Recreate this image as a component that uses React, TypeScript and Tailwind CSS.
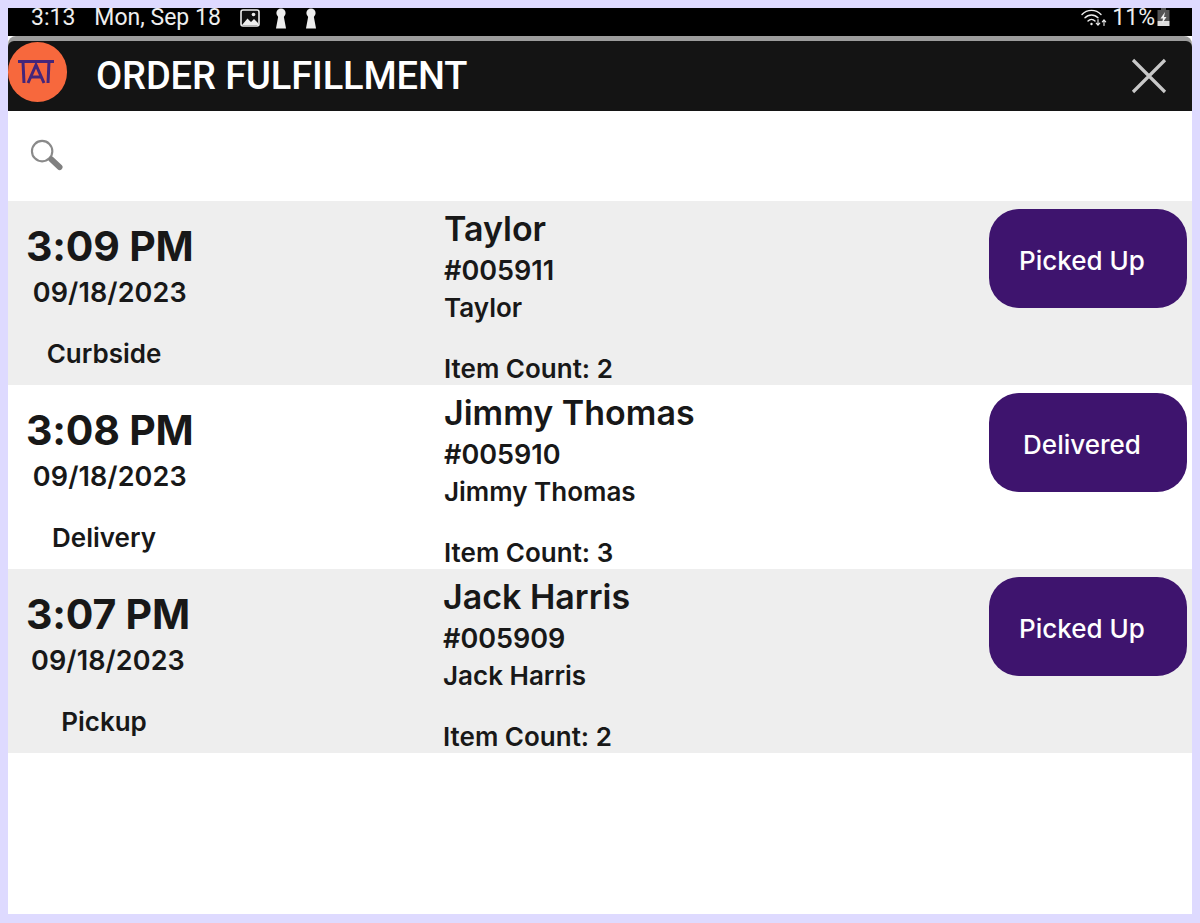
const font = { fontFamily: "Inter, 'Liberation Sans', sans-serif" };

const rows = [
  { time: "3:09 PM", date: "09/18/2023", type: "Curbside", name: "Taylor", id: "#005911", count: "Item Count: 2", action: "Picked Up", bg: "bg-[#eeeeee]", col: "w-[436px]" },
  { time: "3:08 PM", date: "09/18/2023", type: "Delivery", name: "Jimmy Thomas", id: "#005910", count: "Item Count: 3", action: "Delivered", bg: "bg-white", col: "w-[436px]" },
  { time: "3:07 PM", date: "09/18/2023", type: "Pickup", name: "Jack Harris", id: "#005909", count: "Item Count: 2", action: "Picked Up", bg: "bg-[#eeeeee]", col: "w-[435px]" },
];

function Logo() {
  return (
    <div className="mb-[8px] flex h-[60px] w-[59px] shrink-0 items-center justify-center rounded-full bg-[#f7683d] pr-[3px]">
      <svg width="40" height="32" viewBox="0 0 40 32" fill="none" stroke="#45267a" strokeWidth="3">
        <path d="M2 5.5H38" strokeWidth="3.2" />
        <path d="M7 6L8 27" />
        <path d="M33 6L32 27" />
        <path d="M12 27L20 9L28 27" />
        <path d="M15 21H25" />
      </svg>
    </div>
  );
}

function ImageIcon() {
  return (
    <svg width="20" height="18" viewBox="0 0 20 18" fill="none">
      <rect x="1" y="1" width="18" height="16" rx="2" fill="#111" stroke="#eee" strokeWidth="1.6" />
      <path d="M2 16L7.5 9.5L11 13L14 10L18 14V16Z" fill="#eee" />
      <circle cx="13.5" cy="5.5" r="1.8" fill="#eee" />
    </svg>
  );
}

function KeyholeIcon() {
  return (
    <svg width="14" height="21" viewBox="0 0 14 21" fill="#eeeeee">
      <circle cx="7" cy="5" r="4.6" />
      <path d="M4.5 7H9.5L12 20.5H2Z" />
    </svg>
  );
}

function WifiIcon() {
  return (
    <svg width="26" height="20" viewBox="0 0 26 20" fill="none" stroke="#eeeeee" strokeLinecap="round">
      <path d="M1 6.5C6 1 15 1 20 6.5" strokeWidth="1.4" />
      <path d="M4 9.8C7.5 6 13.5 6 17 9.8" strokeWidth="1.4" />
      <path d="M7 13C9 11 12 11 14 13" strokeWidth="1.4" />
      <circle cx="10.5" cy="16" r="1.2" fill="#eeeeee" stroke="none" />
      <path d="M17 11.5V17M15.2 15.2L17 17.2L18.8 15.2" strokeWidth="1.1" />
      <path d="M23 17.5V12M21.3 13.8L23 11.8L24.7 13.8" strokeWidth="1.1" />
    </svg>
  );
}

function BatteryIcon() {
  return (
    <svg width="13" height="20" viewBox="0 0 13 20">
      <rect x="4" y="0" width="5" height="3" fill="#555" />
      <rect x="0.5" y="2" width="12" height="11" fill="#555" />
      <rect x="0.5" y="13" width="12" height="5" fill="#ddd" />
      <path d="M8 4L3.5 10.5H6L5 15.5L9.5 9H7Z" fill="#f2f2f2" />
    </svg>
  );
}

function SearchIcon() {
  return (
    <svg width="33" height="33" viewBox="0 0 34 34" fill="none">
      <circle cx="12.5" cy="12.5" r="10.5" stroke="#8a8a8a" strokeWidth="2.2" />
      <path d="M22 21L30.5 29" stroke="#808080" strokeWidth="6" strokeLinecap="round" />
    </svg>
  );
}

export default function App() {
  return (
    <div className="flex h-[923px] w-[1200px] flex-col overflow-hidden bg-[#dedaff] pl-2 pr-2 pt-2 pb-[9px]" style={font}>
      <div className="flex flex-1 flex-col bg-white">
        <div className="flex h-[28px] items-start justify-between bg-black pl-[23px] pr-[22px] text-[#eeeeee]" style={{ fontFamily: "Roboto, sans-serif" }}>
          <div className="flex items-start">
            <span className="text-[23px] leading-[19px]">3:13</span>
            <span className="ml-[19px] text-[23px] leading-[19px]">Mon, Sep 18</span>
            <span className="ml-[19px] flex h-[19px] items-center"><ImageIcon /></span>
            <span className="ml-[14px] flex h-[21px] items-center"><KeyholeIcon /></span>
            <span className="ml-[16px] flex h-[21px] items-center"><KeyholeIcon /></span>
          </div>
          <div className="flex items-start">
            <WifiIcon />
            <span className="ml-[5px] text-[23px] leading-[19px]">11%</span>
            <span className="ml-[2px]"><BatteryIcon /></span>
          </div>
        </div>
        <div className="flex h-[75px] flex-col rounded-t-[8px] bg-[#9c9c9c] pt-[5px]">
          <div className="flex h-[70px] items-center justify-between rounded-t-[6px] bg-[#141414] pr-[25px]">
            <div className="flex items-center">
              <Logo />
              <span className="ml-[29px] text-[38px] font-medium tracking-[-0.1px] text-white" style={{ fontFamily: "Roboto, sans-serif" }}>
                ORDER FULFILLMENT
              </span>
            </div>
            <svg width="36" height="36" viewBox="0 0 36 36" stroke="#c8c8c8" strokeWidth="3.2">
              <path d="M2 2L34 34M34 2L2 34" />
            </svg>
          </div>
        </div>
        <div className="flex h-[90px] items-start pl-[22px] pt-[28px]">
          <SearchIcon />
        </div>
        {rows.map((r) => (
          <div key={r.id} className={`flex h-[184px] ${r.bg} text-[#181818]`}>
            <div className={`flex shrink-0 flex-col ${r.col}`}>
              <div className="ml-[18px] inline-flex w-fit flex-col items-center pt-[20px]">
                <span className="text-[41px] font-bold leading-[50px] tracking-[-0.2px]">{r.time}</span>
                <span className="mt-[6px] text-[27px] font-semibold leading-[32px] tracking-[0.1px]">{r.date}</span>
              </div>
              <span className="mt-[29px] w-[192px] text-center text-[26px] font-semibold leading-[32px]">{r.type}</span>
            </div>
            <div className="flex flex-1 flex-col pt-[7px]">
              <span className="text-[34px] font-semibold leading-[42px]">{r.name}</span>
              <span className="mt-[2px] text-[27px] font-semibold leading-[38px]">{r.id}</span>
              <span className="text-[26px] font-semibold leading-[36px]">{r.name}</span>
              <span className="mt-[25px] text-[26px] font-semibold leading-[36px]">{r.count}</span>
            </div>
            <div className="mr-[5px] mt-2 flex h-[99px] w-[198px] shrink-0 items-center justify-center rounded-[30px] bg-[#3e146e] pr-[12px] pt-[4px] text-[26px] font-medium text-white">
              {r.action}
            </div>
          </div>
        ))}
      </div>
    </div>
  );
}
